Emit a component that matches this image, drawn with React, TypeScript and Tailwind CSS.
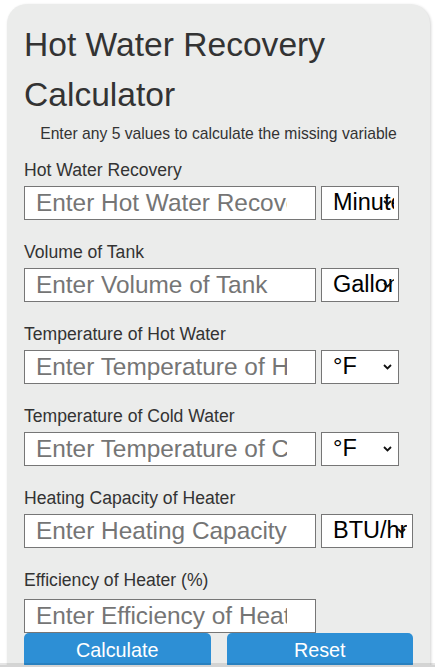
import { useState } from 'react';

interface Field {
    label: string;
    placeholder: string;
    unit?: string;
    unitWidth?: string;
}

const fields: Field[] = [
    { label: 'Hot Water Recovery', placeholder: 'Enter Hot Water Recovery', unit: 'Minutes', unitWidth: 'w-[78px]' },
    { label: 'Volume of Tank', placeholder: 'Enter Volume of Tank', unit: 'Gallons', unitWidth: 'w-[78px]' },
    { label: 'Temperature of Hot Water', placeholder: 'Enter Temperature of Hot Water', unit: '°F', unitWidth: 'w-[78px]' },
    { label: 'Temperature of Cold Water', placeholder: 'Enter Temperature of Cold Water', unit: '°F', unitWidth: 'w-[78px]' },
    { label: 'Heating Capacity of Heater', placeholder: 'Enter Heating Capacity of Heater', unit: 'BTU/hr', unitWidth: 'w-[92px]' },
    { label: 'Efficiency of Heater (%)', placeholder: 'Enter Efficiency of Heater' },
];

function UnitSelect({ value, width }: { value: string; width: string }) {
    return (
        <div className={`relative flex h-[34px] ${width} shrink-0 items-center border border-[#767676] bg-white pr-[4px]`}>
            <span className="overflow-hidden pl-[11px] text-[23.5px] whitespace-nowrap text-black">{value}</span>
            {/* dropdown arrow sits over the text like the native one */}
            <svg className="absolute right-[6px] top-1/2 h-[6px] w-[9px] -translate-y-1/2" viewBox="0 0 9 6" fill="none">
                <path d="M1 1l3.5 3.5L8 1" stroke="#111" strokeWidth={1.8} />
            </svg>
        </div>
    );
}

export default function App() {
    const [values, setValues] = useState<string[]>(fields.map(() => ''));

    return (
        <div className="relative h-[671px] overflow-hidden bg-white font-['Liberation_Sans',Arial,sans-serif]">
            <div className="ml-[7px] mt-[4px] w-[423px] rounded-t-[20px] bg-[#ebeceb] px-[17px] pt-[16px] pb-[20px] shadow-[1px_1px_3px_rgba(0,0,0,0.18)]">
                <h1 className="text-[33.6px] leading-[50px] text-[#333]">Hot Water Recovery Calculator</h1>
                <p className="mt-[4px] text-center text-[15.7px] leading-[20px] text-[#333]">
                    Enter any 5 values to calculate the missing variable
                </p>

                <div className="mt-[16px] flex flex-col gap-[22px]">
                    {fields.map((f, i) => (
                        <div key={f.label} className="flex flex-col">
                            <label className={`text-[17.6px] leading-[20px] text-[#333] ${f.unit ? 'mb-[6px]' : 'mb-[9px]'}`}>
                                {f.label}
                            </label>
                            <div className="flex h-[34px] gap-[5px]">
                                <input
                                    type="text"
                                    value={values[i]}
                                    placeholder={f.placeholder}
                                    onChange={(e) => setValues(values.map((v, j) => (j === i ? e.target.value : v)))}
                                    className="h-[34px] w-[292px] shrink-0 border border-[#767676] bg-white pl-[11px] pr-[28px] text-[24.4px] text-black placeholder:text-[#757575] outline-none"
                                />
                                {f.unit && <UnitSelect value={f.unit} width={f.unitWidth ?? 'w-[78px]'} />}
                            </div>
                        </div>
                    ))}
                </div>

                <div className="flex gap-[16px]">
                    <button className="h-[36px] w-[187px] rounded-[5px] bg-[#2d8fd5] text-[19.8px] text-white">Calculate</button>
                    <button
                        className="h-[36px] w-[187px] rounded-[5px] bg-[#2d8fd5] text-[19.8px] text-white"
                        onClick={() => setValues(fields.map(() => ''))}
                    >
                        Reset
                    </button>
                </div>
            </div>

            {/* bottom edge strip that overlays the page */}
            <div className="absolute inset-x-0 bottom-0 flex flex-col">
                <div className="h-[2px] bg-black/10" />
                <div className="h-[2px] bg-[#d4d4d4]" />
                <div className="h-[4px] bg-white" />
            </div>
        </div>
    );
}
